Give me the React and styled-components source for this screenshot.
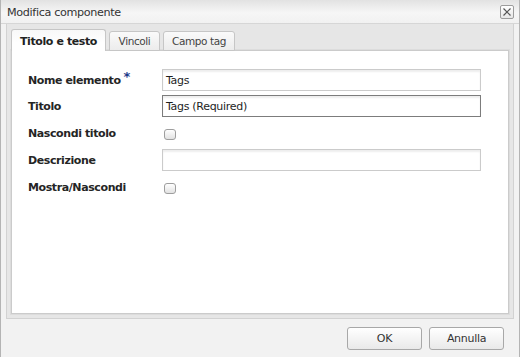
import React from "react";
import styled, { createGlobalStyle } from "styled-components";

const GlobalStyle = createGlobalStyle`
  html, body {
    margin: 0;
    padding: 0;
    background: #f2f2f2;
  }
  body {
    font-family: "DejaVu Sans", Verdana, sans-serif;
    color: #222;
  }
`;

const Window = styled.div`
  width: 520px;
  height: 357px;
  box-sizing: border-box;
  display: flex;
  flex-direction: column;
  background: #f2f2f2;
  border-left: 1px solid #b4b4b4;
  border-right: 1px solid #b4b4b4;
`;

const TitleBar = styled.div`
  height: 24px;
  flex: none;
  display: flex;
  align-items: center;
  justify-content: space-between;
  padding: 0 5px 0 6px;
  box-sizing: border-box;
  border-bottom: 1px solid #d6d6d6;
  background: linear-gradient(#e2e2e2, #f6f6f6 55%, #f1f1f1);
`;

const Title = styled.span`
  font-size: 11.2px;
  letter-spacing: -0.35px;
  color: #333;
  padding-top: 1px;
`;

const CloseButton = styled.button`
  width: 14px;
  height: 14px;
  padding: 0;
  border: 1px solid #9c9c9c;
  border-radius: 2px;
  background: linear-gradient(#ffffff, #e6e6e6);
  display: flex;
  align-items: center;
  justify-content: center;
  margin-top: 1px;
`;

const Content = styled.div`
  flex: none;
  padding: 0 5px;
`;

const Panel = styled.div`
  height: 295px;
  box-sizing: border-box;
  background: #e6e6e6;
  border: 1px solid #d2d2d2;
  border-top: none;
  padding: 5px 3px 3px 3px;
  display: flex;
  flex-direction: column;
`;

const TabBar = styled.div`
  display: flex;
  align-items: flex-end;
  gap: 3px;
  height: 22px;
  padding-left: 1px;
  position: relative;
  z-index: 1;
  margin-bottom: -1px;
`;

const Tab = styled.div`
  width: ${(p) => p.$width}px;
  height: ${(p) => (p.$active ? 22 : 20)}px;
  box-sizing: border-box;
  display: flex;
  align-items: center;
  justify-content: center;
  font-size: ${(p) => (p.$active ? "11px" : "10.5px")};
  letter-spacing: -0.4px;
  font-weight: ${(p) => (p.$active ? "bold" : "normal")};
  color: ${(p) => (p.$active ? "#222" : "#444")};
  border: 1px solid #c6c6c6;
  border-bottom: ${(p) => (p.$active ? "none" : "1px solid #c6c6c6")};
  border-radius: 3px 3px 0 0;
  background: ${(p) =>
    p.$active
      ? "linear-gradient(#f8f8f8, #ffffff 60%)"
      : "linear-gradient(#fafafa, #ececec)"};
  padding-top: ${(p) => (p.$active ? "1px" : "0")};
`;

const Body = styled.div`
  flex: 1;
  background: #ffffff;
  border: 1px solid #cbcbcb;
  box-shadow: 0 0 0 1px #dcdcdc;
  margin: 0 1px 1px 1px;
`;

const Form = styled.div`
  display: grid;
  grid-template-columns: 134px 319px;
  row-gap: 4px;
  padding: 18px 0 0 16px;
`;

const Label = styled.div`
  height: ${(p) => (p.$tall ? 24 : 22)}px;
  display: flex;
  align-items: center;
  font-size: 11px;
  letter-spacing: -0.4px;
  font-weight: bold;
  color: #252525;
`;

const Required = styled.span`
  color: #1d3b8a;
  font-size: 13px;
  font-weight: bold;
  margin-left: 3px;
  position: relative;
  top: -4px;
`;

const Field = styled.div`
  height: ${(p) => (p.$tall ? 24 : 22)}px;
  display: flex;
  align-items: center;
`;

const TextInput = styled.div`
  width: 100%;
  height: 22px;
  box-sizing: border-box;
  display: flex;
  align-items: center;
  padding: 0 3px;
  font-size: 11px;
  letter-spacing: -0.3px;
  color: #1e1e1e;
  background: #ffffff;
  border: 1px solid ${(p) => (p.$focused ? "#7c7c7c" : "#cbcbcb")};
  box-shadow: inset 0 2px 2px rgba(0, 0, 0, 0.07);
`;

const CheckBox = styled.span`
  width: 12px;
  height: 11px;
  box-sizing: border-box;
  margin: 3px 0 0 2px;
  border: 1px solid #9e9e9e;
  border-radius: 3px;
  background: linear-gradient(#ffffff, #e2e2e2);
`;

const Footer = styled.div`
  flex: 1;
  display: flex;
  justify-content: flex-end;
  align-items: flex-start;
  gap: 7px;
  padding: 8px 15px 0 0;
`;

const Button = styled.button`
  width: 75px;
  height: 23px;
  box-sizing: border-box;
  border: 1px solid #a8a8a8;
  border-radius: 3px;
  background: linear-gradient(#ffffff, #e9e9e9);
  font-family: "DejaVu Sans", Verdana, sans-serif;
  font-size: 11px;
  letter-spacing: -0.3px;
  color: #333;
  padding: 0;
`;

const fields = [
  { label: "Nome elemento", type: "text", value: "Tags", required: true },
  { label: "Titolo", type: "text", value: "Tags (Required)", focused: true },
  { label: "Nascondi titolo", type: "check" },
  { label: "Descrizione", type: "text", value: "" },
  { label: "Mostra/Nascondi", type: "check" },
];

const tabs = [
  { name: "Titolo e testo", width: 95, active: true },
  { name: "Vincoli", width: 51 },
  { name: "Campo tag", width: 72 },
];

export default function App() {
  return (
    <>
      <GlobalStyle />
      <Window>
        <TitleBar>
          <Title>Modifica componente</Title>
          <CloseButton aria-label="Chiudi">
            <svg width="10" height="10" viewBox="0 0 10 10">
              <path
                d="M1.5 1.5 L8.5 8.5 M8.5 1.5 L1.5 8.5"
                stroke="#555"
                strokeWidth="1.2"
              />
            </svg>
          </CloseButton>
        </TitleBar>
        <Content>
          <Panel>
            <TabBar>
              {tabs.map((t) => (
                <Tab key={t.name} $width={t.width} $active={t.active}>
                  {t.name}
                </Tab>
              ))}
            </TabBar>
            <Body>
              <Form>
                {fields.map((f) => (
                  <React.Fragment key={f.label}>
                    <Label $tall={f.type === "check"}>
                      {f.label}
                      {f.required && <Required>*</Required>}
                    </Label>
                    <Field $tall={f.type === "check"}>
                      {f.type === "check" ? (
                        <CheckBox />
                      ) : (
                        <TextInput $focused={f.focused}>{f.value}</TextInput>
                      )}
                    </Field>
                  </React.Fragment>
                ))}
              </Form>
            </Body>
          </Panel>
        </Content>
        <Footer>
          <Button>OK</Button>
          <Button>Annulla</Button>
        </Footer>
      </Window>
    </>
  );
}
